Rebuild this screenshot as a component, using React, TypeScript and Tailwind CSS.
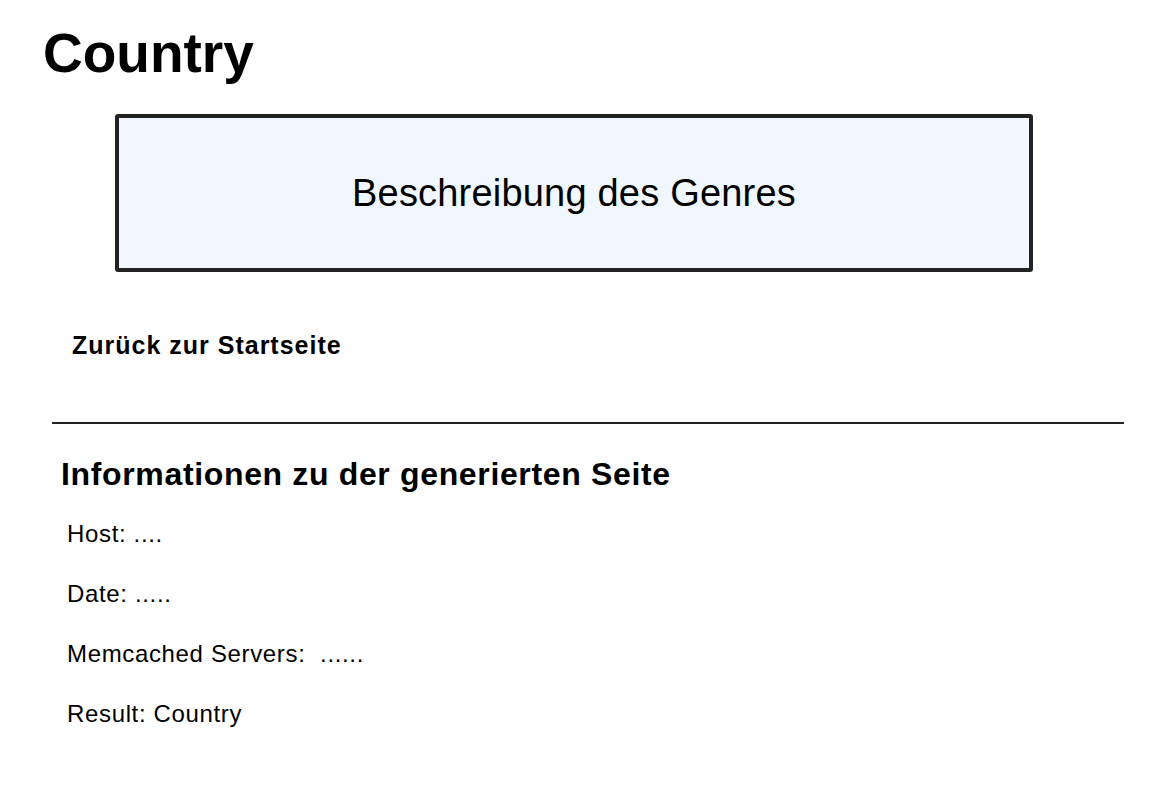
import React from 'react';

const infoRows = ['Host: ....', 'Date: .....', 'Memcached Servers:\u00a0\u00a0......', 'Result: Country'];

export default function App() {
  return (
    <div className="min-h-[807px] w-full bg-white text-black font-['Liberation_Sans',Arial,sans-serif]">
      <h1 className="ml-[43px] pt-[26px] text-[55px] leading-[55px] font-bold">Country</h1>

      {/* genre description box */}
      <div className="ml-[115px] mt-[33px] flex h-[158px] w-[918px] items-center justify-center rounded-[3px] border-4 border-[#222222] bg-[#f1f7fe]">
        <span className="text-[38px] leading-none tracking-[0.2px]">Beschreibung des Genres</span>
      </div>

      <a href="#" className="ml-[72px] mt-[61px] block text-[25px] leading-none font-bold tracking-[1px]">
        Zurück zur Startseite
      </a>

      <hr className="ml-[52px] mt-[64px] h-[2px] w-[1072px] border-0 bg-[#222222]" />

      <h2 className="ml-[61px] mt-[34px] text-[32px] leading-none font-bold tracking-[0.65px]">
        Informationen zu der generierten Seite
      </h2>

      <div className="ml-[67px] mt-[32px] flex flex-col gap-[36px]">
        {infoRows.map((row) => (
          <p key={row} className="text-[24px] leading-none tracking-[0.65px]">
            {row}
          </p>
        ))}
      </div>
    </div>
  );
}
